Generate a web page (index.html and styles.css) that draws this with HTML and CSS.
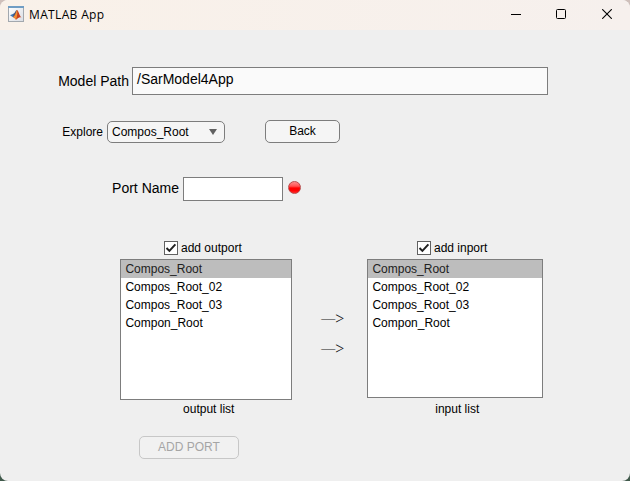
FILE: index.html
```
<!DOCTYPE html>
<html lang="en">
<head>
<meta charset="utf-8">
<title>MATLAB App</title>
<link rel="stylesheet" href="styles.css">
</head>
<body>
<div class="window">
  <header class="titlebar">
    <svg class="logo" width="16" height="16" viewBox="0 0 16 16">
      <defs><linearGradient id="frame" x2="1" y2="1"><stop stop-color="#ffffff"/><stop offset="1" stop-color="#d9dde4"/></linearGradient></defs>
      <rect x=".5" y=".5" width="15" height="15" fill="url(#frame)" stroke="#a2a8ae"/>
      <path d="M0 0h16v2H0z" fill="#6f9dc4"/>
      <path d="M2 9.300 5.300 7.700 7 9.500 5 11.200z" fill="#3d78b8"/>
      <path d="M5.300 7.700C7 7.500 7.600 4 9 4L7.600 9.500 5 11.200z" fill="#445a80"/>
      <path d="M9 4c1.300 0 2.200 5.500 4.500 7.600-2-1-3 .2-5.500 2.100-.8-1.200-1.400-2.300-3-2.500C7.500 9.500 7.600 6 9 4z" fill="#c83f1e"/>
      <path d="M9 4c.8 2 .2 6.500-1 9.700-.8-1.200-1.400-2.300-3-2.500C7.500 9.500 8 6 9 4z" fill="#ee8f35"/>
    </svg>
    <span class="title">MATLAB App</span>
    <div class="controls">
      <svg width="10" height="10" viewBox="0 0 10 10"><path d="M0 5.500h10" stroke="#000" fill="none"/></svg>
      <svg width="10" height="10" viewBox="0 0 10 10"><rect x=".5" y=".5" width="9" height="9" rx="1" stroke="#000" fill="none"/></svg>
      <svg width="10" height="10" viewBox="0 0 10 10"><path d="m.2.2 9.600 9.600M9.800.2.2 9.800" stroke="#000" stroke-width="1.100" fill="none"/></svg>
    </div>
  </header>
  <main class="content">
    <div class="row path-row">
      <span class="label large model">Model Path</span>
      <div class="field path large"><span class="path-text">/SarModel4App</span></div>
    </div>
    <div class="row explore-row">
      <span class="label explore">Explore</span>
      <div class="select"><span>Compos_Root</span>
        <svg width="8" height="6" viewBox="0 0 8 6"><path d="M0 0h8L4 6z" fill="#616161"/></svg>
      </div>
      <div class="button back">Back</div>
    </div>
    <div class="row port-row">
      <span class="label large port">Port Name</span>
      <div class="field name"></div>
      <span class="lamp"></span>
    </div>
    <div class="lists">
      <section class="group out">
        <div class="check"><svg width="14" height="14" viewBox="0 0 14 14"><rect x=".5" y=".5" width="13" height="13" fill="#fff" stroke="#616161"/><path d="m2.500 7 2.900 2.900 6-6.500" stroke="#212121" stroke-width="2" fill="none"/></svg><span>add outport</span></div>
        <ul class="list">
          <li class="selected">Compos_Root</li><li>Compos_Root_02</li><li>Compos_Root_03</li><li>Compon_Root</li>
        </ul>
        <div class="caption">output list</div>
      </section>
      <div class="arrows"><span><span class="dash">—</span>&gt;</span><span><span class="dash">—</span>&gt;</span></div>
      <section class="group in">
        <div class="check"><svg width="14" height="14" viewBox="0 0 14 14"><rect x=".5" y=".5" width="13" height="13" fill="#fff" stroke="#616161"/><path d="m2.500 7 2.900 2.900 6-6.500" stroke="#212121" stroke-width="2" fill="none"/></svg><span>add inport</span></div>
        <ul class="list">
          <li class="selected">Compos_Root</li><li>Compos_Root_02</li><li>Compos_Root_03</li><li>Compon_Root</li>
        </ul>
        <div class="caption">input list</div>
      </section>
    </div>
    <div class="button add">ADD PORT</div>
  </main>
</div>
</body>
</html>
```
FILE: styles.css
```
* { box-sizing: border-box; }
body {
  margin: 0;
  width: 630px;
  height: 481px;
  overflow: hidden;
  background: linear-gradient(#cfc0bb, #40594b);
  font: 12px/18px "Liberation Sans", Arial, sans-serif;
  color: #000;
}
svg { display: block; flex: none; }
.window { height: 481px; border-radius: 8px; overflow: hidden; background: #efefef; }
.titlebar {
  display: flex;
  height: 30px;
  padding: 0 18px 2px 8px;
  align-items: center;
  background: linear-gradient(90deg, #f9f1e9, #f6f0ed);
}
.title { margin-left: 5px; padding-top: 1px; font: 12px/20px "Open Sans", "Noto Sans", sans-serif; letter-spacing: .35px; white-space: nowrap; }
.controls { display: flex; gap: 36px; margin-left: auto; }
.controls svg:first-child { margin-right: -1px; }
.content { padding-top: 37px; white-space: nowrap; }
.row { display: flex; align-items: center; }
.label { text-align: right; }
.large { font-size: 14px; }
.model { width: 129px; margin-right: 3px; }
.field { border: 1px solid #7d7d7d; background: #fff; }
.path { width: 416px; height: 28px; padding: 2px 4px; background: #fafafa; line-height: 18px; }
.explore-row { height: 23px; margin-top: 25px; }
.explore { width: 103px; margin-right: 4px; }
.select, .button { border: 1px solid #7d7d7d; border-radius: 5px; background: #f5f5f5; }
.select {
  display: flex;
  align-items: center;
  justify-content: space-between;
  width: 118px;
  height: 22px;
  margin-top: 1px;
  padding: 0 7px 0 4px;
}
.button { display: flex; align-items: center; justify-content: center; height: 23px; }
.back { width: 75px; margin-left: 40px; padding-bottom: 2px; }
.port-row { height: 24px; margin-top: 34px; }
.port { width: 179px; margin-right: 4px; padding-bottom: 2px; }
.name { width: 100px; height: 24px; }
.lamp {
  width: 13px;
  height: 13px;
  margin: -3px 0 0 5px;
  border: 1px solid #b84b4b;
  border-radius: 50%;
  background: linear-gradient(#ff8a8a 0, #ff5252 38%, #f00 55%, #f00 75%, #ff2929);
}
.lists { display: flex; height: 179px; margin-top: 38px; padding-left: 120px; }
.out { width: 172px; }
.in { width: 176px; }
.check { display: flex; align-items: center; height: 18px; margin-bottom: 2px; gap: 3px; }
.out .check { padding-left: 44px; }
.in .check { padding-left: 50px; }
.list { height: 141px; margin: 0; padding: 0; list-style: none; border: 1px solid #7d7d7d; background: #fff; }
.in .list { height: 139px; }
.list li { height: 18px; padding-left: 4.4px; }
.list .selected { color: #212121; background: #bdbdbd; }
.caption { text-align: center; }
.out .caption { padding-left: 5.500px; }
.in .caption { padding: 2px 0 0 4.500px; }
.arrows { display: flex; flex-direction: column; gap: 12px; width: 75px; padding: 71px 0 0 6.500px; align-items: center; font: 16px/18px "Liberation Serif", serif; color: #111; }
.dash { font-size: 14px; line-height: 1; color: #222; vertical-align: 1px; }
.add { width: 100px; margin: 18px 0 0 139px; padding-bottom: 2px; color: #a5a5a5; border-color: #c7c7c7; background: #f1f1f1; }
```
